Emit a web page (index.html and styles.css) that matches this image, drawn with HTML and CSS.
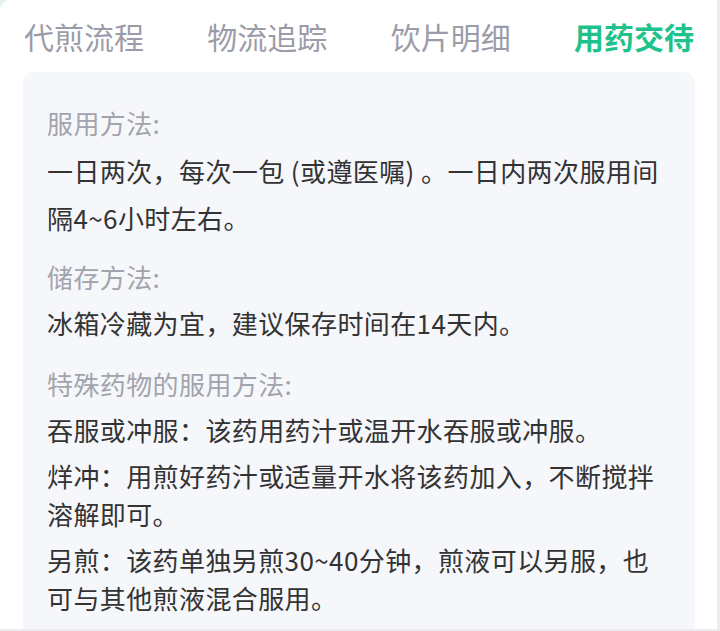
FILE: index.html
```html
<!DOCTYPE html>
<html lang="zh-CN">
<head>
<meta charset="utf-8">
<title>用药交待</title>
<link rel="stylesheet" href="styles.css">
</head>
<body>
<div class="card">
  <nav class="tabs">
    <span class="tab">代煎流程</span>
    <span class="tab">物流追踪</span>
    <span class="tab">饮片明细</span>
    <span class="tab tab--active">用药交待</span>
  </nav>
  <div class="panel">
    <section class="section">
      <div class="label">服用方法:</div>
      <p class="text text--loose">一日两次，每次一包 (或遵医嘱) 。一日内两次服用间隔4~6小时左右。</p>
    </section>
    <section class="section">
      <div class="label">储存方法:</div>
      <p class="text">冰箱冷藏为宜，建议保存时间在14天内。</p>
    </section>
    <section class="section">
      <div class="label">特殊药物的服用方法:</div>
      <p class="text">吞服或冲服：该药用药汁或温开水吞服或冲服。</p>
      <p class="text">烊冲：用煎好药汁或适量开水将该药加入，不断搅拌溶解即可。</p>
      <p class="text">另煎：该药单独另煎30~40分钟，煎液可以另服，也可与其他煎液混合服用。</p>
    </section>
  </div>
</div>
</body>
</html>
```
FILE: styles.css
```css
html, body {
  margin: 0;
  padding: 0;
}
body {
  width: 720px;
  height: 631px;
  overflow: hidden;
  background: #ececee;
  font-family: "Noto Sans CJK SC", "Noto Sans", sans-serif;
}
.card {
  width: 717px;
  height: 629px;
  background: #ffffff;
  border-top-left-radius: 10px;
  box-shadow: -1px -1px 0 #dff5ec;
  overflow: hidden;
  display: flex;
  flex-direction: column;
}
.tabs {
  display: flex;
  justify-content: space-between;
  padding: 21px 23px 21px 24px;
}
.tab {
  font-size: 30px;
  line-height: 30px;
  color: #9b9ca8;
}
.tab--active {
  color: #1fc28c;
  font-weight: 600;
}
.panel {
  flex: 1;
  margin: 0 22px 0 23px;
  padding: 32px 24px 0;
  background: #f6f7fb;
  border-radius: 10px 10px 0 0;
}
.section + .section {
  margin-top: 23px;
}
.label {
  font-size: 26px;
  line-height: 38px;
  letter-spacing: 0.4px;
  color: #a2a4ad;
}
.text {
  margin: 8px 0 0;
  font-size: 26px;
  line-height: 38px;
  letter-spacing: 0.4px;
  color: #333333;
}
.text--loose {
  line-height: 47px;
  margin-top: 5px;
  margin-bottom: -6px;
}
```
